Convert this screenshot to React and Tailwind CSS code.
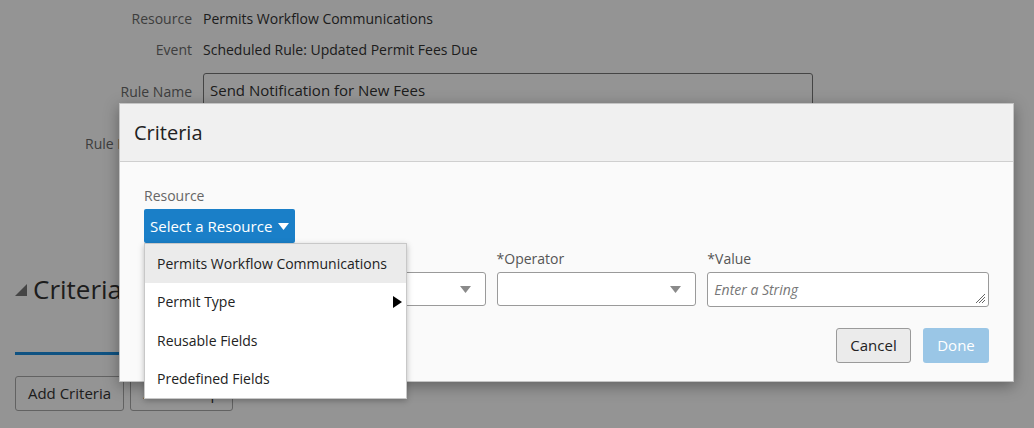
import React from 'react';

const FONT = { fontFamily: '"Open Sans", "Noto Sans", Arial, sans-serif' };

const MENU_ITEMS = [
  { id: 'pwc', label: 'Permits Workflow Communications', active: true },
  { id: 'pt', label: 'Permit Type', sub: true },
  { id: 'rf', label: 'Reusable Fields' },
  { id: 'pf', label: 'Predefined Fields' },
];

function Row({ label, children }) {
  return (
    <div className="flex items-center gap-[11px]">
      <span className="w-[192px] shrink-0 text-right text-[14px] text-[#6b6b6b]">{label}</span>
      <div className="text-[14px] text-[#333]">{children}</div>
    </div>
  );
}

function Caret({ className = '' }) {
  return (
    <svg width="11" height="7" viewBox="0 0 11 7" className={className}>
      <path d="M0 0h11L5.5 7z" fill="currentColor" />
    </svg>
  );
}

function ResourceMenu() {
  return (
    <div className="absolute left-0 top-[34px] z-30 w-[263px] border border-[#c8c8c8] bg-white shadow-[0_2px_6px_rgba(0,0,0,0.25)]">
      {MENU_ITEMS.map((it) => (
        <div
          key={it.id}
          className={`flex h-[38.5px] items-center justify-between pl-[12px] pr-[4px] text-[14px] text-[#222] ${
            it.active ? 'bg-[#ebebeb]' : ''
          }`}
        >
          <span>{it.label}</span>
          {it.sub && (
            <svg width="9" height="12" viewBox="0 0 9 12">
              <path d="M0 0l9 6-9 6z" fill="#000" />
            </svg>
          )}
        </div>
      ))}
    </div>
  );
}

function CriteriaDialog() {
  return (
    <div className="absolute left-[119px] top-[103px] z-20 w-[895px] border border-[#c4c4c4] bg-[#fafafa] shadow-[0_4px_14px_rgba(0,0,0,0.35)]">
      <div className="flex h-[58px] items-center border-b border-[#cfcfcf] bg-[#f0f0f0] px-[14px]">
        <h2 className="text-[20px] font-normal text-[#222]">Criteria</h2>
      </div>
      <div className="px-[24px] pb-[18px] pt-[24px]">
        <div className="text-[14px] leading-[20px] text-[#666]">Resource</div>
        <div className="relative mt-[3px] w-fit">
          <button
            type="button"
            className="flex h-[34px] items-center gap-[6px] rounded-[2px] bg-[#1a7fc8] px-[6px] text-[15px] text-white"
          >
            Select a Resource
            <Caret className="text-white" />
          </button>
          <ResourceMenu />
        </div>

        <div className="mt-[6px] flex gap-[11px]">
          <div className="w-[342px]">
            <div className="h-[20px] text-[14px] leading-[20px] text-[#555]">*Field</div>
            <div className="mt-[3px] flex h-[34px] items-center justify-end rounded-[3px] border border-[#9a9a9a] bg-white pr-[14px]">
              <Caret className="text-[#8a8a8a]" />
            </div>
          </div>
          <div className="w-[200px]">
            <div className="h-[20px] text-[14px] leading-[20px] text-[#555]">*Operator</div>
            <div className="mt-[3px] flex h-[34px] items-center justify-end rounded-[3px] border border-[#9a9a9a] bg-white pr-[14px]">
              <Caret className="text-[#8a8a8a]" />
            </div>
          </div>
          <div className="w-[282px]">
            <div className="h-[20px] text-[14px] leading-[20px] text-[#555]">*Value</div>
            <div className="relative mt-[3px] flex h-[35px] items-center rounded-[3px] border border-[#9a9a9a] bg-white px-[6px]">
              <span className="text-[14px] italic text-[#777]">Enter a String</span>
              <svg width="11" height="11" viewBox="0 0 11 11" className="absolute bottom-[2px] right-[2px]">
                <path d="M10 1L1 10M10 4L4 10M10 7L7 10" stroke="#666" strokeWidth="1" />
              </svg>
            </div>
          </div>
        </div>

        <div className="mt-[21px] flex justify-end gap-[12px]">
          <button
            type="button"
            className="h-[35px] w-[75px] rounded-[3px] border border-[#9a9a9a] bg-[#ebebeb] text-[15px] text-[#222]"
          >
            Cancel
          </button>
          <button
            type="button"
            className="h-[35px] w-[66px] rounded-[3px] bg-[#9ac6e6] text-[15px] text-white"
          >
            Done
          </button>
        </div>
      </div>
    </div>
  );
}

export default function App() {
  return (
    <div className="relative h-[428px] w-[1034px] overflow-hidden bg-white" style={FONT}>
      {/* page underneath the modal */}
      <div className="flex flex-col pt-[8px]">
        <Row label="Resource">Permits Workflow Communications</Row>
        <div className="mt-[10px]">
          <Row label="Event">Scheduled Rule: Updated Permit Fees Due</Row>
        </div>
        <div className="mt-[13px] flex items-center gap-[11px]">
          <span className="w-[192px] shrink-0 pt-[2px] text-right text-[14px] text-[#6b6b6b]">Rule Name</span>
          <div className="flex h-[34px] w-[610px] items-center rounded-[3px] border border-[#777] px-[6px] text-[15px] text-[#333]">
            Send Notification for New Fees
          </div>
        </div>
        <div className="mt-[26px] flex items-start gap-[11px]">
          <span className="w-[192px] shrink-0 text-right text-[14px] text-[#6b6b6b]">Rule Description</span>
          <div className="h-[60px] w-[610px] rounded-[3px] border border-[#777]" />
        </div>

        <div className="mt-[77px] flex items-center gap-[6px] px-[15px]">
          <svg width="12" height="12" viewBox="0 0 12 12">
            <path d="M12 0v12H0z" fill="#777" />
          </svg>
          <h1 className="text-[26px] font-normal text-[#333]">Criteria</h1>
        </div>
        <div className="mx-[15px] mt-[43px] h-[3px] w-[200px] bg-[#1a8ee0]" />
        <div className="mt-[21px] flex gap-[6px] px-[15px]">
          <button type="button" className="h-[35px] w-[109px] rounded-[3px] border border-[#aaa] text-[15px] text-[#333]">
            Add Criteria
          </button>
          <button type="button" className="h-[35px] w-[103px] rounded-[3px] border border-[#aaa] text-[15px] text-[#333]">
            Add Group
          </button>
        </div>
      </div>

      <div className="absolute inset-0 z-10 bg-black/[0.42]" />
      <CriteriaDialog />
    </div>
  );
}
